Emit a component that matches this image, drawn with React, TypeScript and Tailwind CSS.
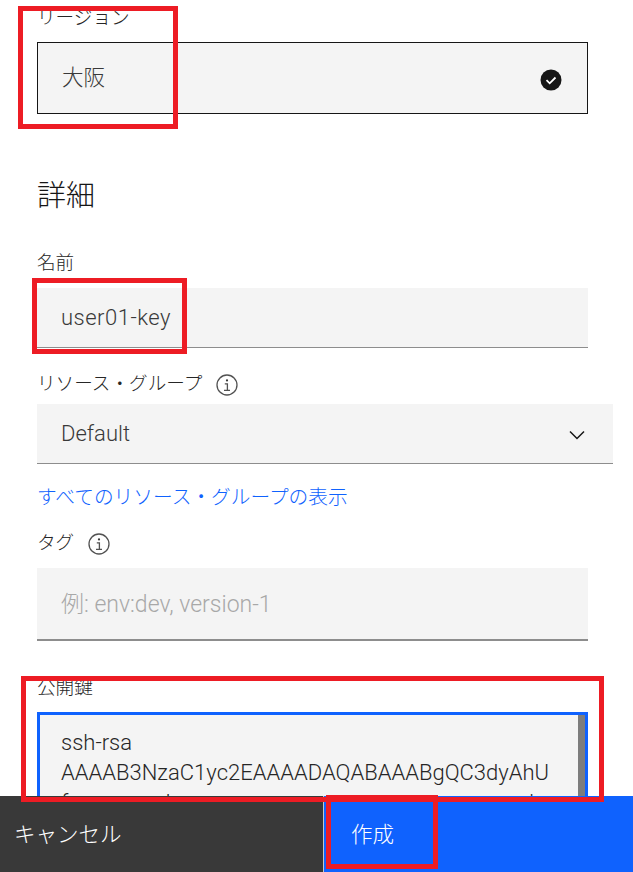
import React from 'react';

const cjk = "font-['Roboto','Noto_Sans_CJK_JP',sans-serif]";

const Label: React.FC<{ children: React.ReactNode; info?: boolean }> = ({ children, info }) => (
  <div className="flex h-[24px] items-center gap-[14px] pt-[2px] text-[18.6px] font-light text-[#262626]">
    <span>{children}</span>
    {info && <InfoIcon />}
  </div>
);

const InfoIcon = () => (
  <svg width="22" height="22" viewBox="0 0 22 22" fill="none" stroke="#525252">
    <circle cx="11" cy="11" r="10" strokeWidth="1.3" />
    <circle cx="11" cy="6.4" r="1.1" fill="#393939" stroke="none" />
    <path d="M8.8 9.8h2.6v6.4M8 16.4h6" strokeWidth="1.3" />
  </svg>
);

const RedBox: React.FC<{ className: string }> = ({ className }) => (
  <div className={`absolute border-[5px] border-[#ed1c24] ${className}`} />
);

export default function App() {
  return (
    <div className={`relative flex h-[872px] w-[633px] flex-col overflow-hidden bg-white ${cjk}`}>
      <div className="h-[796px] overflow-hidden pl-[37px] pr-[20px] pt-[6px]">
        <Label>リージョン</Label>
        <div className="mt-[12px] flex h-[72px] w-[551px] items-center justify-between border border-[#161616] bg-[#f4f4f4] pl-[24px] pr-[25px]">
          <span className="text-[21.5px] font-light text-[#393939]">大阪</span>
          <svg className="mt-[4px]" width="22" height="22" viewBox="0 0 22 22">
            <circle cx="11" cy="11" r="10.5" fill="#161616" />
            <path d="M6.5 11.2l3.2 3.1 5.8-5.8" fill="none" stroke="#fff" strokeWidth="1.8" />
          </svg>
        </div>

        <h2 className="mt-[62px] h-[40px] text-[29px] font-light leading-[40px] text-[#161616]">詳細</h2>

        <div className="mt-[35px]"><Label>名前</Label></div>
        <div className="mt-[13px] flex h-[60px] w-[551px] items-center border-b border-[#8d8d8d] bg-[#f4f4f4] pl-[24px] text-[22px] font-light tracking-[0.5px] text-[#393939]">
          user01-key
        </div>

        <div className="mt-[24px]"><Label info>リソース・グループ</Label></div>
        <div className="mt-[8px] flex h-[60px] w-[576px] items-center justify-between border-b border-[#8d8d8d] bg-[#f4f4f4] pl-[24px] pr-[28px] text-[22px] font-light text-[#393939]">
          <span>Default</span>
          <svg className="mt-[2px]" width="16" height="16" viewBox="0 0 16 16" fill="none" stroke="#161616" strokeWidth="1.5">
            <path d="M1 4.5l7 7 7-7" />
          </svg>
        </div>

        <div className="mt-[21px] text-[19.7px] font-light leading-[26px] text-[#0f62fe]">すべてのリソース・グループの表示</div>

        <div className="mt-[20px]"><Label info>タグ</Label></div>
        <div className="mt-[13px] flex h-[73px] w-[551px] items-center border-b-2 border-[#8d8d8d] bg-[#f4f4f4] pl-[24px] pt-[4px] text-[23px] font-light text-[#a8a8a8]">
          例: env:dev, version-1
        </div>

        <div className="mt-[35px]"><Label>公開鍵</Label></div>
        <div className="relative mt-[12px] h-[100px] w-[551px] border-[3px] border-[#0f62fe] bg-[#f4f4f4] pl-[21px] pt-[13px] text-[22px] font-light leading-[30px] text-[#262626]">
          <div>ssh-rsa</div>
          <div>AAAAB3NzaC1yc2EAAAADAQABAAABgQC3dyAhU</div>
          <div className="whitespace-nowrap">fmnoprsuvhmnopqrsuvwxzmnopqrsuvwxzmnopkmn</div>
          <div className="absolute bottom-0 right-0 top-0 w-[7px] bg-[#7d7d7d]" />
        </div>
      </div>

      <div className="flex h-[76px] text-[21.5px] font-light text-white">
        <div className="flex w-[323px] items-center bg-[#393939] pl-[14px] pt-[3px]">キャンセル</div>
        <div className="w-px bg-[#c6c6c6]" />
        <div className="flex flex-1 items-center bg-[#0f62fe] pl-[27px] pt-[3px]">作成</div>
      </div>

      <RedBox className="left-[18px] top-[6px] h-[123px] w-[160px]" />
      <RedBox className="left-[32px] top-[278px] h-[76px] w-[155px]" />
      <RedBox className="left-[21px] top-[676px] h-[126px] w-[583px]" />
      <RedBox className="left-[326px] top-[795px] h-[74px] w-[112px]" />
    </div>
  );
}
